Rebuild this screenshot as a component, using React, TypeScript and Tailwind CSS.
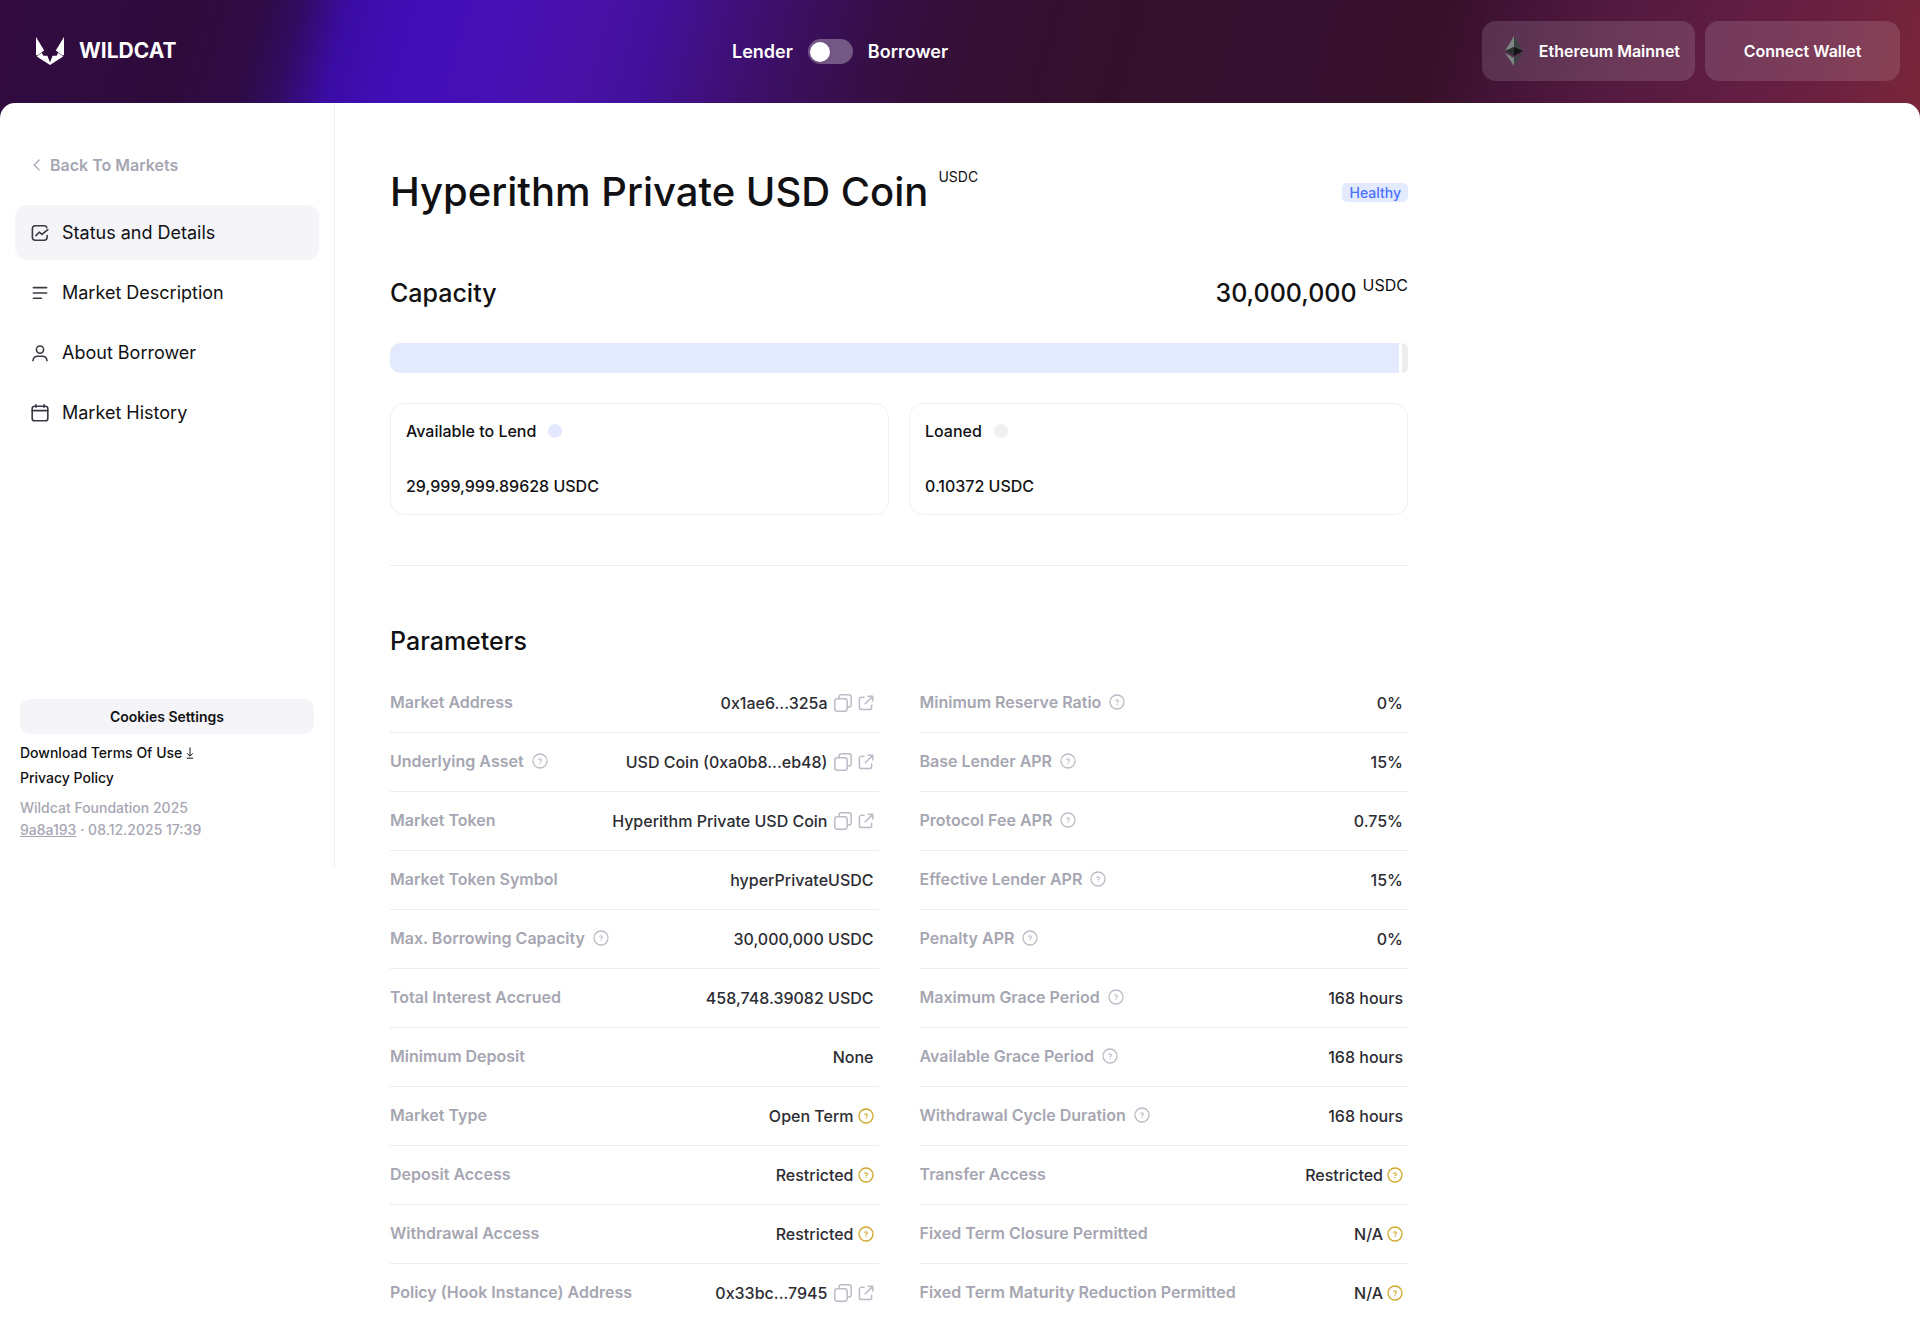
import { useState, type ReactNode } from "react";

interface Parameter {
  label: string;
  value: string;
  help?: boolean;
  links?: boolean;
  notice?: boolean;
}

const leftParameters: Parameter[] = [
  { label: "Market Address", value: "0x1ae6...325a", links: true },
  { label: "Underlying Asset", value: "USD Coin (0xa0b8...eb48)", help: true, links: true },
  { label: "Market Token", value: "Hyperithm Private USD Coin", links: true },
  { label: "Market Token Symbol", value: "hyperPrivateUSDC" },
  { label: "Max. Borrowing Capacity", value: "30,000,000 USDC", help: true },
  { label: "Total Interest Accrued", value: "458,748.39082 USDC" },
  { label: "Minimum Deposit", value: "None" },
  { label: "Market Type", value: "Open Term", notice: true },
  { label: "Deposit Access", value: "Restricted", notice: true },
  { label: "Withdrawal Access", value: "Restricted", notice: true },
  { label: "Policy (Hook Instance) Address", value: "0x33bc...7945", links: true },
];

const rightParameters: Parameter[] = [
  { label: "Minimum Reserve Ratio", value: "0%", help: true },
  { label: "Base Lender APR", value: "15%", help: true },
  { label: "Protocol Fee APR", value: "0.75%", help: true },
  { label: "Effective Lender APR", value: "15%", help: true },
  { label: "Penalty APR", value: "0%", help: true },
  { label: "Maximum Grace Period", value: "168 hours", help: true },
  { label: "Available Grace Period", value: "168 hours", help: true },
  { label: "Withdrawal Cycle Duration", value: "168 hours", help: true },
  { label: "Transfer Access", value: "Restricted", notice: true },
  { label: "Fixed Term Closure Permitted", value: "N/A", notice: true },
  { label: "Fixed Term Maturity Reduction Permitted", value: "N/A", notice: true },
];

function Logo() {
  return (
    <svg className="h-7 w-7" viewBox="0 0 28 28" fill="#fff">
      <path d="M0 0L8.2 13.4L1.4 18.6L0 18Z" />
      <path d="M28 0L19.8 13.4L26.6 18.6L28 18Z" />
      <path d="M0.8 19.4L5.8 15.8L7.4 18.8H11.4L14 25.4L16.6 18.8H20.6L22.2 15.8L27.2 19.4L14 28Z" />
    </svg>
  );
}

function EthereumIcon() {
  return (
    <svg className="h-[30px] w-[18px]" viewBox="0 0 18 30">
      <path d="M9 0L0 15L9 11Z" fill="#7d8482" />
      <path d="M9 0L18 15L9 11Z" fill="#3b4343" />
      <path d="M0 15L9 11V20Z" fill="#2c3232" />
      <path d="M18 15L9 11V20Z" fill="#121416" />
      <path d="M0 17L9 22V30Z" fill="#7d8482" />
      <path d="M18 17L9 22V30Z" fill="#3b4343" />
    </svg>
  );
}

function HelpIcon({ className }: { className: string }) {
  return (
    <svg className={className} viewBox="0 0 16 16" fill="none" stroke="currentColor">
      <circle cx="8" cy="8" r="7" strokeWidth="1.3" />
      <path d="M6.6 7C6.6 5.3 9.4 5.3 9.4 7C9.4 8 8.1 8 8.1 9.2M8.1 9.9V11" strokeWidth="1.1" />
    </svg>
  );
}

function CopyIcon() {
  return (
    <svg className="h-[18px] w-[18px]" viewBox="0 0 18 18" fill="none" stroke="currentColor" strokeWidth="1.5">
      <rect x="0.8" y="4.8" width="12.4" height="12.4" rx="2.6" />
      <path d="M5 4.6V3.4C5 1.9 6 0.8 7.5 0.8H14.6C16.1 0.8 17.2 1.9 17.2 3.4V10.4C17.2 11.9 16.1 13 14.6 13H13.4" />
    </svg>
  );
}

function ExternalIcon() {
  return (
    <svg
      className="h-4 w-4"
      viewBox="0 0 16 16"
      fill="none"
      stroke="currentColor"
      strokeWidth="1.5"
      strokeLinecap="round"
      strokeLinejoin="round"
    >
      <path d="M6 2.2H3.6C2.3 2.2 1.4 3.1 1.4 4.4V12.4C1.4 13.7 2.3 14.6 3.6 14.6H11.4C12.7 14.6 13.6 13.7 13.6 12.4V10" />
      <path d="M10 1.2H14.8V6M14.4 1.6L7.2 8.8" />
    </svg>
  );
}

function NavIcon({ children }: { children: ReactNode }) {
  return (
    <svg
      className="h-5 w-5 text-[#3a3a45]"
      viewBox="0 0 20 20"
      fill="none"
      stroke="currentColor"
      strokeWidth="1.6"
      strokeLinecap="round"
      strokeLinejoin="round"
    >
      {children}
    </svg>
  );
}

const navItems = [
  {
    label: "Status and Details",
    icon: (
      <NavIcon>
        <path d="M16.8 4.6C16.4 3.4 15.6 2.8 14.2 2.8H5.4C3.6 2.8 2.4 4 2.4 5.8V14.2C2.4 16 3.6 17.2 5.4 17.2H14.2C15.8 17.2 16.9 16.2 17.1 14.6V12.6" />
        <path d="M6 12.6L9.2 9.2L12 11.4L17.8 6.6" />
      </NavIcon>
    ),
  },
  {
    label: "Market Description",
    icon: (
      <NavIcon>
        <path d="M3.4 4.6H16.6M3.4 10H16.6M3.4 15.2H11.4" />
      </NavIcon>
    ),
  },
  {
    label: "About Borrower",
    icon: (
      <NavIcon>
        <circle cx="10" cy="6.6" r="3.6" />
        <path d="M3 17.6C3.4 14.6 5.4 13.2 7.6 13.2H12.4C14.6 13.2 16.6 14.6 17 17.6" />
      </NavIcon>
    ),
  },
  {
    label: "Market History",
    icon: (
      <NavIcon>
        <rect x="2.2" y="3.2" width="15.6" height="14.6" rx="2.4" />
        <path d="M2.2 7.6H17.8M6 1.8V4.2M14 1.8V4.2" />
      </NavIcon>
    ),
  },
];

function Header() {
  const [isBorrower, setIsBorrower] = useState(false);

  return (
    <header className="flex h-[103px] items-center justify-between pr-5 pb-0.5 pl-9 font-semibold text-white">
      <a href="#" className="flex w-[162px] items-center gap-[15px] text-[21px] font-bold">
        <Logo />
        WILDCAT
      </a>
      <div className="flex items-center gap-[15px] pt-0.5 text-lg">
        <label htmlFor="role">Lender</label>
        <input
          id="role"
          type="checkbox"
          role="switch"
          checked={isBorrower}
          onChange={() => setIsBorrower(!isBorrower)}
          className="flex h-[25px] w-[45px] cursor-pointer appearance-none items-center rounded-full bg-white/30 px-0.5 before:h-5 before:w-5 before:rounded-full before:bg-white before:shadow checked:justify-end"
        />
        <label htmlFor="role">Borrower</label>
      </div>
      <div className="flex gap-2.5 text-base">
        <button className="flex h-[60px] w-[213px] items-center justify-end gap-4 rounded-[14px] bg-white/13 pr-[15px]">
          <EthereumIcon />
          Ethereum Mainnet
        </button>
        <button className="h-[60px] w-[195px] rounded-[14px] bg-white/13">Connect Wallet</button>
      </div>
    </header>
  );
}

function Sidebar() {
  return (
    <aside className="flex h-[765px] w-[335px] shrink-0 flex-col justify-between border-r border-[#f0f0f2] px-[15px] pt-[50px] pb-[27px]">
      <div>
        <a href="#" className="flex items-center gap-[9px] pl-[18px] text-base leading-6 font-semibold text-[#a6a6b2]">
          <svg className="h-3 w-2" viewBox="0 0 8 12" fill="none" stroke="currentColor" strokeWidth="1.3">
            <path d="M6.6 0.6L1.2 6L6.6 11.4" />
          </svg>
          Back To Markets
        </a>
        <nav className="mt-7 flex flex-col gap-[5px]">
          {navItems.map((item, i) => (
            <button
              key={item.label}
              className={`flex h-[55px] items-center gap-3 rounded-xl px-[15px] text-lg text-[#111113] ${
                i === 0 ? "bg-[#f4f4f9]" : ""
              }`}
            >
              {item.icon}
              {item.label}
            </button>
          ))}
        </nav>
      </div>
      <div className="flex flex-col px-[5px] text-sm font-medium text-[#111113]">
        <button className="h-[35px] rounded-[10px] bg-[#f4f4f9] font-semibold">Cookies Settings</button>
        <a href="#" className="mt-1.5 flex items-center gap-1 leading-[25px]">
          Download Terms Of Use
          <svg className="h-3 w-2" viewBox="0 0 8 12" fill="none" stroke="currentColor">
            <path d="M4 0.5V9M1.2 6.4L4 9.2L6.8 6.4M0.8 11.2H7.2" />
          </svg>
        </a>
        <a href="#" className="leading-[25px]">
          Privacy Policy
        </a>
        <div className="mt-[7px] leading-[22px] text-[#a6a6b2]">
          <p>Wildcat Foundation 2025</p>
          <p>
            <a href="#" className="underline">
              9a8a193
            </a>{" "}
            · 08.12.2025 17:39
          </p>
        </div>
      </div>
    </aside>
  );
}

function ParameterList({ items }: { items: Parameter[] }) {
  return (
    <dl className="flex-1">
      {items.map((item) => (
        <div
          key={item.label}
          className="flex h-[59px] justify-between border-b border-[#ededf0] pt-4 pr-[5px] text-base leading-6 font-medium last:border-b-0"
        >
          <dt className="flex items-center gap-2 self-start font-semibold text-[#a6a6b2]">
            {item.label}
            {item.help && <HelpIcon className="h-4 w-4 text-[#bcbcc8]" />}
          </dt>
          <dd className="flex items-center gap-1 self-start pt-px text-[#2c2c33]">
            {item.value}
            {item.links && (
              <span className="flex items-center gap-1.5 pl-0.5 text-[#bcbcc8]">
                <button aria-label="Copy">
                  <CopyIcon />
                </button>
                <a href="#" aria-label="Open in explorer">
                  <ExternalIcon />
                </a>
              </span>
            )}
            {item.notice && <HelpIcon className="h-4 w-4 text-[#d0a82a]" />}
          </dd>
        </div>
      ))}
    </dl>
  );
}

function CapacityCard({ label, value, dot }: { label: string; value: string; dot: string }) {
  return (
    <div className="flex h-28 flex-1 flex-col justify-between rounded-[14px] border border-[#f0f0f2] px-[15px] pt-[15px] pb-4 text-base leading-6 font-medium">
      <div className="flex items-center gap-3">
        {label}
        <span className={`h-3.5 w-3.5 rounded-full ${dot}`} />
      </div>
      <div>{value}</div>
    </div>
  );
}

export default function App() {
  return (
    <div className="min-h-screen bg-[linear-gradient(105deg,#310b40_0%,#2f0b3c_10%,#2e0b44_13.5%,#300c62_15.5%,#3a0ca4_18%,#410eb6_21%,#4610b6_26%,#4a12aa_30%,#42109a_34%,#401080_37%,#3b1062_41%,#350f42_46%,#340f35_50%,#33102a_58%,#361030_67%,#371028_74%,#431437_78%,#531a3f_83%,#601d43_89%,#6a2040_94%,#7a263a_100%)] bg-[length:100%_120px] bg-no-repeat font-[Inter,sans-serif]">
      <Header />
      <div className="flex min-h-[calc(100vh-103px)] items-start rounded-t-[15px] bg-white text-[#111113]">
        <Sidebar />
        <main className="ml-[55px] max-w-[1018px] flex-1 pt-[59px]">
          <div className="flex items-center justify-between">
            <h1 className="flex items-start gap-2.5 text-[40px] leading-[60px] font-medium">
              Hyperithm Private USD Coin
              <sup className="top-0 pt-[3px] text-sm leading-6 font-normal">USDC</sup>
            </h1>
            <span className="rounded-[5px] bg-[#e4eafd] px-[7px] text-sm leading-[19px] font-medium text-[#4971ff]">
              Healthy
            </span>
          </div>

          <section className="mt-[52px]">
            <div className="flex items-start justify-between text-[25px] leading-[38px] font-medium">
              <h2>Capacity</h2>
              <p className="flex items-start gap-1.5">
                30,000,000
                <sup className="top-0 text-base leading-[22px] font-normal">USDC</sup>
              </p>
            </div>
            <div className="mt-[31px] flex h-[30px] gap-[3px]">
              <div className="flex-1 rounded-l-[10px] bg-[#e4eafd]" />
              <div className="w-1.5 rounded-r-md bg-[#ededf0]" />
            </div>
            <div className="mt-[30px] flex gap-5">
              <CapacityCard label="Available to Lend" value="29,999,999.89628 USDC" dot="bg-[#e4e8ff]" />
              <CapacityCard label="Loaned" value="0.10372 USDC" dot="bg-[#f0f0f2]" />
            </div>
          </section>

          <section className="mt-[50px] border-t border-[#ededf0] pt-14">
            <h2 className="text-[25px] leading-[38px] font-medium">Parameters</h2>
            <div className="mt-3.5 flex gap-[41px]">
              <ParameterList items={leftParameters} />
              <ParameterList items={rightParameters} />
            </div>
          </section>
        </main>
      </div>
    </div>
  );
}
